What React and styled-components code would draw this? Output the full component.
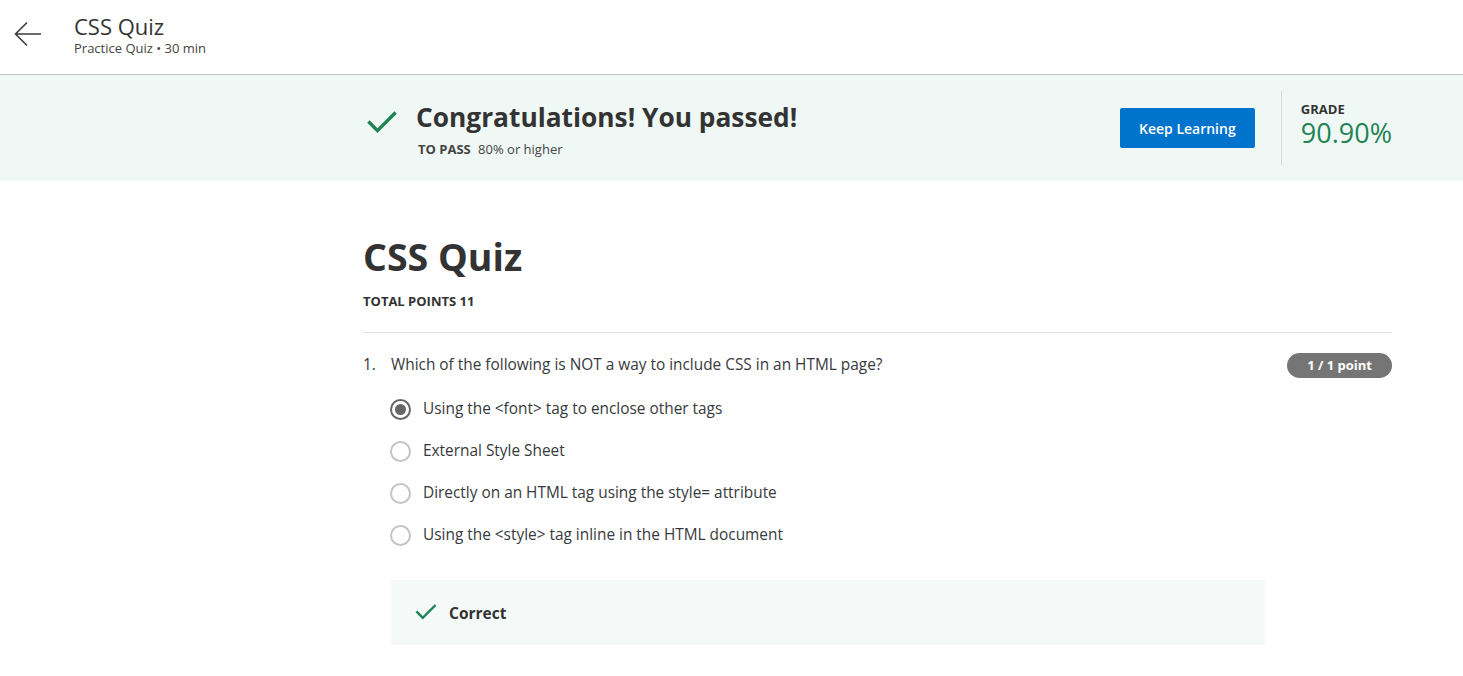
import React, { useState } from "react";
import styled, { createGlobalStyle } from "styled-components";

const options = [
  "Using the <font> tag to enclose other tags",
  "External Style Sheet",
  "Directly on an HTML tag using the style= attribute",
  "Using the <style> tag inline in the HTML document",
];

const CheckIcon = ({ size = 30 }) => (
  <svg width={size} height={size} viewBox="0 0 30 30" fill="none">
    <path d="M3 15.5 L11 23.5 L27 7.5" stroke="#1f8354" strokeWidth="3" />
  </svg>
);

function App() {
  const [picked, setPicked] = useState(0);

  return (
    <>
      <GlobalStyle />
      <Header>
        <BackButton aria-label="Back">
          <svg width="28" height="26" viewBox="0 0 28 26" fill="none">
            <path d="M27 13 H2 M13 1.5 L1.5 13 L13 24.5" stroke="#3c3c3c" strokeWidth="1.6" />
          </svg>
        </BackButton>
        <HeaderText>
          <HeaderTitle>CSS Quiz</HeaderTitle>
          <HeaderSub>Practice Quiz • 30 min</HeaderSub>
        </HeaderText>
      </Header>

      <Banner>
        <BannerInner>
          <BannerLeft>
            <CheckIcon size={34} />
            <div>
              <BannerTitle>Congratulations! You passed!</BannerTitle>
              <PassLine>
                <strong>TO PASS</strong> 80% or higher
              </PassLine>
            </div>
          </BannerLeft>
          <BannerRight>
            <KeepButton>Keep Learning</KeepButton>
            <GradeBox>
              <SmallLabel>GRADE</SmallLabel>
              <GradeValue>90.90%</GradeValue>
            </GradeBox>
          </BannerRight>
        </BannerInner>
      </Banner>

      <Main>
        <QuizTitle>CSS Quiz</QuizTitle>
        <SmallLabel>TOTAL POINTS 11</SmallLabel>
        <Rule />
        <QuestionRow>
          <QuestionNum>1.</QuestionNum>
          <QuestionText>Which of the following is NOT a way to include CSS in an HTML page?</QuestionText>
          <PointBadge>1 / 1 point</PointBadge>
        </QuestionRow>
        <OptionList>
          {options.map((opt, i) => (
            <OptionRow key={opt} onClick={() => setPicked(i)}>
              <Radio $checked={picked === i} />
              {opt}
            </OptionRow>
          ))}
        </OptionList>
        <Feedback>
          <CheckIcon size={24} />
          <span>Correct</span>
        </Feedback>
      </Main>
    </>
  );
}

const GlobalStyle = createGlobalStyle`
  body {
    margin: 0;
    background: #fff;
    font-family: "Open Sans", "Noto Sans", sans-serif;
    color: #373a3c;
  }
`;

const Header = styled.header`
  display: flex;
  align-items: center;
  height: 75px;
  border-bottom: 1px solid #c4c4c4;
  box-sizing: border-box;
`;

const BackButton = styled.button`
  display: flex;
  align-items: center;
  justify-content: center;
  width: 28px;
  margin: 0 32px 6px 14px;
  padding: 0;
  border: none;
  background: none;
  cursor: pointer;
`;

const HeaderText = styled.div`
  display: flex;
  flex-direction: column;
  margin-bottom: 6px;
`;

const HeaderTitle = styled.h1`
  margin: 0;
  font-size: 22px;
  font-weight: 400;
  line-height: 28px;
  color: #333;
`;

const HeaderSub = styled.div`
  font-size: 13px;
  line-height: 16px;
  color: #444;
`;

const Banner = styled.section`
  background: #f0f8f6;
  height: 106px;
  padding: 0 71px 0 363px;
  display: flex;
`;

const BannerInner = styled.div`
  flex: 1;
  display: flex;
  justify-content: space-between;
  align-items: center;
`;

const BannerLeft = styled.div`
  display: flex;
  align-items: flex-start;
  gap: 17px;
  margin-left: 2px;
  margin-top: 2px;

  svg {
    margin-top: 4px;
  }
`;

const BannerTitle = styled.h2`
  margin: 0;
  font-size: 26.3px;
  font-weight: 700;
  line-height: 34px;
  color: #333;
`;

const PassLine = styled.div`
  margin-top: 6px;
  margin-left: 2px;
  font-size: 13px;
  color: #444;

  strong {
    font-size: 13px;
    margin-right: 4px;
  }
`;

const BannerRight = styled.div`
  display: flex;
  align-items: center;
  height: 74px;
`;

const KeepButton = styled.button`
  width: 135px;
  height: 40px;
  border: none;
  border-radius: 2px;
  background: #0073cc;
  color: #fff;
  font-family: inherit;
  font-size: 14px;
  font-weight: 600;
  cursor: pointer;
  margin-right: 26px;
`;

const GradeBox = styled.div`
  height: 100%;
  border-left: 1px solid #d9d9d9;
  padding-left: 19px;
  padding-top: 10px;
  box-sizing: border-box;
`;

const SmallLabel = styled.div`
  font-size: 13px;
  font-weight: 700;
  line-height: 16px;
  color: #333;
`;

const GradeValue = styled.div`
  font-size: 27px;
  line-height: 32px;
  color: #1f8354;
`;

const Main = styled.main`
  margin: 0 71px 0 363px;
  padding-top: 53px;
`;

const QuizTitle = styled.h2`
  margin: 0 0 13px;
  font-size: 37.5px;
  font-weight: 700;
  line-height: 46px;
  color: #333;
`;

const Rule = styled.hr`
  margin: 23px 0 17px;
  border: none;
  border-top: 1px solid #e1e1e1;
`;

const QuestionRow = styled.div`
  display: flex;
  align-items: center;
  font-size: 15.4px;
`;

const QuestionNum = styled.span`
  width: 28px;
`;

const QuestionText = styled.span`
  flex: 1;
`;

const PointBadge = styled.span`
  background: #757575;
  color: #fff;
  font-size: 13px;
  font-weight: 700;
  height: 25px;
  line-height: 25px;
  padding: 0 20px;
  border-radius: 13px;
  margin-top: 3px;
`;

const OptionList = styled.div`
  display: flex;
  flex-direction: column;
  gap: 20px;
  margin: 20px 0 0 27px;
`;

const OptionRow = styled.label`
  display: flex;
  align-items: center;
  gap: 12px;
  font-size: 15.4px;
  line-height: 22px;
  cursor: pointer;
`;

const Radio = styled.span`
  width: 21px;
  height: 21px;
  border-radius: 50%;
  border: 2px solid ${(p) => (p.$checked ? "#666" : "#c4c4c4")};
  box-sizing: border-box;
  position: relative;
  flex-shrink: 0;

  &::after {
    content: "";
    display: ${(p) => (p.$checked ? "block" : "none")};
    position: absolute;
    inset: 3px;
    border-radius: 50%;
    background: #666;
  }
`;

const Feedback = styled.div`
  display: flex;
  align-items: center;
  gap: 11px;
  margin: 34px 0 0 28px;
  width: 874px;
  height: 65px;
  padding-left: 23px;
  box-sizing: border-box;
  background: #f5f9f8;
  font-size: 15.5px;
  font-weight: 700;
  color: #333;

  svg {
    margin-top: -4px;
  }
`;

export default App;
